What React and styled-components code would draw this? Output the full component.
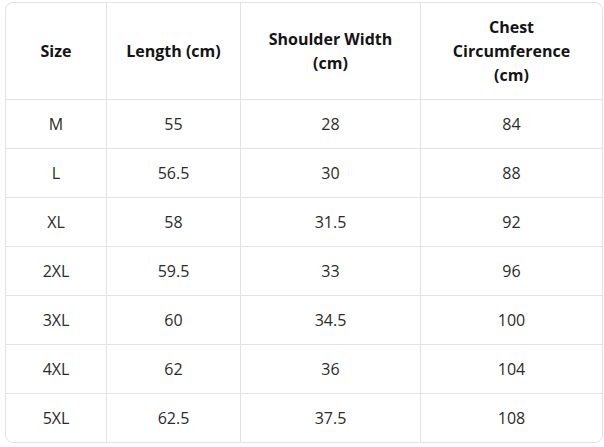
import React from 'react';
import styled, { createGlobalStyle } from 'styled-components';

const GlobalStyle = createGlobalStyle`
  html, body {
    margin: 0;
    padding: 0;
    background: #fff;
  }
  body {
    font-family: "Open Sans", "Noto Sans", "Liberation Sans", sans-serif;
  }
`;

const Wrap = styled.div`
  padding: 2px 3px 0 5px;
`;

const Table = styled.table`
  width: 596px;
  border-collapse: separate;
  border-spacing: 0;
  border: 1px solid #e3e3e3;
  border-radius: 8px;
  table-layout: fixed;
  color: #2b2b2b;
  font-size: 16px;

  th,
  td {
    text-align: center;
    vertical-align: middle;
    border-right: 1px solid #e3e3e3;
    border-bottom: 1px solid #e3e3e3;
    padding: 0 6px;
  }
  th:last-child,
  td:last-child {
    border-right: none;
  }
  tbody tr:last-child td {
    border-bottom: none;
  }
  thead th {
    height: 96px;
    font-weight: 700;
    color: #141414;
    line-height: 24px;
  }
  tbody td {
    height: 48px;
    line-height: 20px;
  }
`;

const sizes = [
  { size: 'M', length: '55', shoulder: '28', chest: '84' },
  { size: 'L', length: '56.5', shoulder: '30', chest: '88' },
  { size: 'XL', length: '58', shoulder: '31.5', chest: '92' },
  { size: '2XL', length: '59.5', shoulder: '33', chest: '96' },
  { size: '3XL', length: '60', shoulder: '34.5', chest: '100' },
  { size: '4XL', length: '62', shoulder: '36', chest: '104' },
  { size: '5XL', length: '62.5', shoulder: '37.5', chest: '108' },
];

const App = () => (
  <Wrap>
    <GlobalStyle />
    <Table>
      <colgroup>
        <col width="101" />
        <col width="134" />
        <col width="180" />
        <col width="181" />
      </colgroup>
      <thead>
        <tr>
          <th scope="col">Size</th>
          <th scope="col">Length (cm)</th>
          <th scope="col">
            Shoulder Width
            <br />
            (cm)
          </th>
          <th scope="col">
            Chest
            <br />
            Circumference
            <br />
            (cm)
          </th>
        </tr>
      </thead>
      <tbody>
        {sizes.map(s => (
          <tr key={s.size}>
            <td>{s.size}</td>
            <td>{s.length}</td>
            <td>{s.shoulder}</td>
            <td>{s.chest}</td>
          </tr>
        ))}
      </tbody>
    </Table>
  </Wrap>
);

export default App;
